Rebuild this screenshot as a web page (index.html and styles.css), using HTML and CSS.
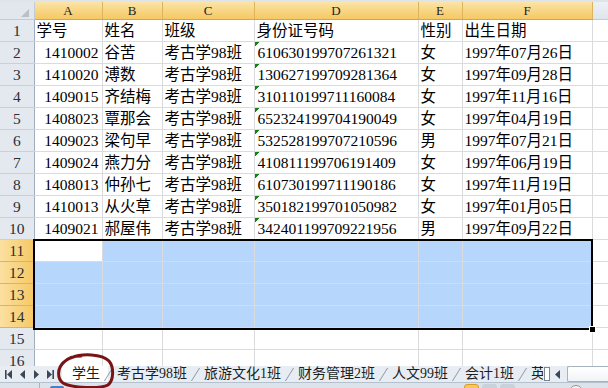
FILE: index.html
```html
<!DOCTYPE html>
<html>
    <head>
        <meta charset="UTF-8"/>
        <title>学生 - Excel</title>
        <link rel="stylesheet" href="styles.css">
    </head>
    <body>
        <div class="sheet">
            <div class="topbar"></div>

            <div class="grid-wrap">
                <table class="grid">
                    <colgroup>
                        <col class="w-rh"><col class="w-a"><col class="w-b"><col class="w-c">
                        <col class="w-d"><col class="w-e"><col class="w-f"><col class="w-g">
                    </colgroup>
                    <thead>
                        <tr>
                            <th class="corner"><span class="corner-tri"></span></th>
                            <th class="col on">A</th>
                            <th class="col on">B</th>
                            <th class="col on">C</th>
                            <th class="col on">D</th>
                            <th class="col on">E</th>
                            <th class="col on">F</th>
                            <th class="col"></th>
                        </tr>
                    </thead>
                    <tbody>
                        <tr><th class="rh">1</th><td>学号</td><td>姓名</td><td>班级</td><td>身份证号码</td><td>性别</td><td>出生日期</td><td></td></tr>
                        <tr><th class="rh">2</th><td class="num">1410002</td><td>谷苦</td><td>考古学98班</td><td class="id">610630199707261321</td><td>女</td><td>1997年07月26日</td><td></td></tr>
                        <tr><th class="rh">3</th><td class="num">1410020</td><td>溥数</td><td>考古学98班</td><td class="id">130627199709281364</td><td>女</td><td>1997年09月28日</td><td></td></tr>
                        <tr><th class="rh">4</th><td class="num">1409015</td><td>齐结梅</td><td>考古学98班</td><td class="id">310110199711160084</td><td>女</td><td>1997年11月16日</td><td></td></tr>
                        <tr><th class="rh">5</th><td class="num">1408023</td><td>覃那会</td><td>考古学98班</td><td class="id">652324199704190049</td><td>女</td><td>1997年04月19日</td><td></td></tr>
                        <tr><th class="rh">6</th><td class="num">1409023</td><td>梁句早</td><td>考古学98班</td><td class="id">532528199707210596</td><td>男</td><td>1997年07月21日</td><td></td></tr>
                        <tr><th class="rh">7</th><td class="num">1409024</td><td>燕力分</td><td>考古学98班</td><td class="id">410811199706191409</td><td>女</td><td>1997年06月19日</td><td></td></tr>
                        <tr><th class="rh">8</th><td class="num">1408013</td><td>仲孙七</td><td>考古学98班</td><td class="id">610730199711190186</td><td>女</td><td>1997年11月19日</td><td></td></tr>
                        <tr><th class="rh">9</th><td class="num">1410013</td><td>从火草</td><td>考古学98班</td><td class="id">350182199701050982</td><td>女</td><td>1997年01月05日</td><td></td></tr>
                        <tr><th class="rh">10</th><td class="num">1409021</td><td>郝屋伟</td><td>考古学98班</td><td class="id">342401199709221956</td><td>男</td><td>1997年09月22日</td><td></td></tr>
                        <tr><th class="rh on">11</th><td class="act"></td><td class="sel"></td><td class="sel"></td><td class="sel"></td><td class="sel"></td><td class="sel"></td><td></td></tr>
                        <tr><th class="rh on">12</th><td class="sel"></td><td class="sel"></td><td class="sel"></td><td class="sel"></td><td class="sel"></td><td class="sel"></td><td></td></tr>
                        <tr><th class="rh on">13</th><td class="sel"></td><td class="sel"></td><td class="sel"></td><td class="sel"></td><td class="sel"></td><td class="sel"></td><td></td></tr>
                        <tr><th class="rh on">14</th><td class="sel"></td><td class="sel"></td><td class="sel"></td><td class="sel"></td><td class="sel"></td><td class="sel"></td><td></td></tr>
                        <tr><th class="rh">15</th><td></td><td></td><td></td><td></td><td></td><td></td><td></td></tr>
                        <tr><th class="rh">16</th><td></td><td></td><td></td><td></td><td></td><td></td><td></td></tr>
                    </tbody>
                </table>

                <!-- selected range A11:F14 -->
                <div class="selection"><span class="fill-handle"></span></div>
            </div>

            <div class="tabbar">
                <div class="tab-nav">
                    <svg width="8" height="9" viewBox="0 0 8 9"><rect x="0" y="0" width="1.6" height="9" fill="#3b4756"/><path d="M7 0 L2 4.5 L7 9 Z" fill="#3b4756"/></svg>
                    <svg width="6" height="9" viewBox="0 0 6 9"><path d="M5 0 L0 4.5 L5 9 Z" fill="#3b4756"/></svg>
                    <svg width="6" height="9" viewBox="0 0 6 9"><path d="M1 0 L6 4.5 L1 9 Z" fill="#3b4756"/></svg>
                    <svg width="8" height="9" viewBox="0 0 8 9"><path d="M1 0 L6 4.5 L1 9 Z" fill="#3b4756"/><rect x="6.4" y="0" width="1.6" height="9" fill="#3b4756"/></svg>
                </div>
                <div class="tabs">
                    <span class="tab active">学生</span><span class="sep"></span>
                    <span class="tab">考古学98班</span><span class="sep"></span>
                    <span class="tab">旅游文化1班</span><span class="sep"></span>
                    <span class="tab">财务管理2班</span><span class="sep"></span>
                    <span class="tab">人文99班</span><span class="sep"></span>
                    <span class="tab">会计1班</span><span class="sep"></span>
                    <span class="tab">英语1班</span>
                </div>
                <span class="splitter"></span>
                <svg class="hs-arrow" width="6" height="9" viewBox="0 0 6 9"><path d="M5 0 L0 4.5 L5 9 Z" fill="#3b4756"/></svg>
                <div class="hscroll"></div>
            </div>

            <div class="statusbar">
                <span class="ready">就绪</span>
                <span class="st-sep"></span>
                <span class="st-icon"></span>
                <span class="views">
                    <span class="view on"></span><span class="view"></span><span class="view"></span>
                </span>
                <span class="zoom-btn"></span>
            </div>

            <!-- hand-drawn mark around the first sheet tab -->
            <svg class="ink" width="64" height="36" viewBox="0 0 64 36">
                <path d="M15 5 C26 0 46 1 53 8 C58 14 58 27 52 32 C44 36 15 35 7 30 C1 26 1 15 8 9 C12 5 18 3 25 3" fill="none" stroke="#7a1414" stroke-width="3" stroke-linecap="round"/>
            </svg>
        </div>
    </body>
</html>
```

FILE: styles.css
```css
body {
    margin: 0;
    padding: 0;
    background: #fff;
    font-family: "Liberation Serif", "Noto Sans CJK SC", serif;
    color: #000;
}

.sheet {
    position: relative;
    width: 608px;
    height: 388px;
    overflow: hidden;
    display: flex;
    flex-direction: column;
}

.topbar {
    height: 2px;
    flex: none;
    background: #dfe4ea;
}

.grid-wrap {
    position: relative;
    height: 364px;
    flex: none;
    overflow: hidden;
}

.grid {
    table-layout: fixed;
    border-collapse: collapse;
    width: 622px;
    font-size: 15.5px;
    line-height: 20px;
}

.w-rh { width: 34px; }
.w-a { width: 68px; }
.w-b { width: 60px; }
.w-c { width: 92px; }
.w-d { width: 164px; }
.w-e { width: 44px; }
.w-f { width: 130px; }
.w-g { width: 30px; }

.grid td {
    height: 21px;
    padding: 0 2px;
    border: 1px solid #d9dbde;
    white-space: nowrap;
    overflow: hidden;
    vertical-align: middle;
    text-align: left;
}

.grid td.num {
    text-align: right;
    padding-right: 3px;
}

/* number-stored-as-text marker */
.grid td.id {
    padding-left: 3px;
    background: linear-gradient(135deg, #17801a 3px, transparent 3px) no-repeat;
    background-size: 7px 7px;
}

.grid td.sel {
    background: #b7d6fb;
}

.grid td.act {
    background: #fff;
}

/* headers */
.grid thead th {
    height: 17px;
    padding: 0;
    font-weight: normal;
    font-size: 13px;
    line-height: 17px;
    color: #27384d;
    border: 1px solid #c3cbd5;
    border-top: none;
    background: linear-gradient(#edf1f5, #dfe5ec);
}

.grid thead th.on {
    background: linear-gradient(#fbe4a6, #f5c863);
    border-right-color: #dfb35c;
    border-bottom: 1px solid #f09a3a;
    color: #222;
}

.grid thead th.corner {
    position: relative;
    border-left: none;
    background: #e2e7ed;
}

.corner-tri {
    position: absolute;
    right: 5px;
    bottom: 2px;
    width: 0;
    height: 0;
    border-left: 8px solid transparent;
    border-bottom: 8px solid #b9c0c9;
}

.grid th.rh {
    padding: 0;
    font-weight: normal;
    text-align: center;
    color: #2a2f36;
    border: 1px solid #c9d0d8;
    border-left: none;
    border-right-color: #9eadbf;
    background: #e4e9ef;
}

.grid th.rh.on {
    background: linear-gradient(to right, #fbe0a0, #f5c865);
    border-bottom-color: #dfb35c;
    border-right-color: #f09a3a;
}

.selection {
    position: absolute;
    left: 33px;
    top: 237px;
    width: 556px;
    height: 87px;
    border: 2px solid #000;
}

.fill-handle {
    position: absolute;
    right: -5px;
    bottom: -5px;
    width: 5px;
    height: 5px;
    background: #000;
    border: 1px solid #fff;
}

/* sheet tabs */
.tabbar {
    height: 16px;
    flex: none;
    display: flex;
    align-items: center;
    background: #e8edf3;
    font-size: 14px;
    line-height: 16px;
    color: #1d1d1d;
}

.tab-nav {
    width: 62px;
    flex: none;
    display: flex;
    align-items: center;
    gap: 7px;
    padding-left: 5px;
    box-sizing: border-box;
}

.tabs {
    flex: none;
    width: 481px;
    height: 16px;
    display: flex;
    align-items: center;
    overflow: hidden;
    white-space: nowrap;
}

.tab {
    padding: 0 8px;
    height: 16px;
}

.tab.active {
    padding-left: 10px;
    background: #fff;
}

.sep {
    flex: none;
    width: 0;
    height: 13px;
    border-left: 1px solid #8d97a3;
    transform: skewX(-32deg);
}

.splitter {
    flex: none;
    width: 4px;
    height: 12px;
    margin: 0 0 0 1px;
    border: 1px solid #7c8692;
    background: #fff;
}

.hs-arrow {
    flex: none;
    margin: 0 6px 0 5px;
}

.hscroll {
    flex: 1;
    height: 14px;
    border: 1px solid #a7b2bf;
    border-right: none;
    border-radius: 2px 0 0 2px;
    background: linear-gradient(#ffffff, #f1f4f7);
}

/* status bar, mostly below the window edge */
.statusbar {
    height: 22px;
    flex: none;
    display: flex;
    align-items: flex-start;
    background: #dde3ea;
    border-top: 1px solid #b7c1cd;
    font-size: 13px;
    color: #333;
}

.ready {
    padding: 3px 0 0 9px;
    width: 30px;
}

.st-sep {
    width: 1px;
    height: 20px;
    background: #aab4c0;
}

.st-icon {
    width: 14px;
    height: 14px;
    margin: 3px 0 0 10px;
    border-radius: 2px;
    background: linear-gradient(135deg, #4a7fc8 50%, #c8463c 50%);
}

.views {
    display: flex;
    gap: 3px;
    margin: 1px 0 0 400px;
}

.view {
    width: 15px;
    height: 14px;
    border-radius: 3px;
    background: #c9d1db;
}

.view.on {
    background: #f8c85a;
    border: 1px solid #d99c2f;
    box-sizing: border-box;
}

.zoom-btn {
    width: 12px;
    height: 12px;
    margin: 2px 0 0 54px;
    border: 1px solid #8a94a0;
    border-radius: 50%;
    background: #f2f4f7;
}

.ink {
    position: absolute;
    left: 56px;
    top: 353px;
}
```
